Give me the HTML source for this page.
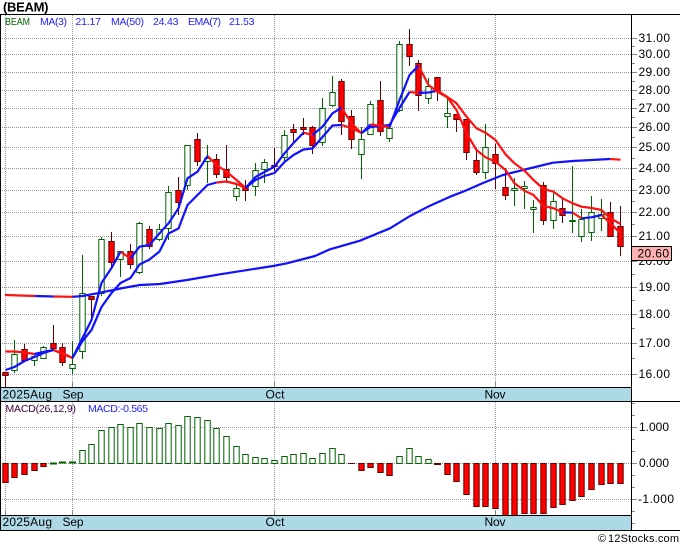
<!DOCTYPE html>
<html><head><meta charset="utf-8"><title>BEAM</title>
<style>html,body{margin:0;padding:0;background:#fff}svg{display:block}text{font-family:"Liberation Sans",sans-serif;fill:#000}.a{font-size:12px}.l{font-size:10.5px}.b rect{width:5.4px;transform:translateX(.3px)}</style>
</head><body>
<svg width="680" height="546" viewBox="0 0 680 546" xmlns="http://www.w3.org/2000/svg">
<rect width="680" height="546" fill="#fff"/>
<rect x="1" y="388" width="631" height="13" fill="#add8e6"/>
<rect x="1" y="516" width="631" height="14" fill="#add8e6"/>
<!-- grid -->
<path d="M0 38.5H632M0 54.5H632M0 72.5H632M0 90.5H632M0 108.5H632M0 127.5H632M0 147.5H632M0 168.5H632M0 190.5H632M0 212.5H632M0 236.5H632M0 261.5H632M0 287.5H632M0 314.5H632M0 343.5H632M0 374.5H632M0 427.5H632M0 463.5H632M0 499.5H632M5.5 15V382M72.5 15V382M274.5 15V382M495.5 15V382M5.5 402V510M72.5 402V510M274.5 402V510M495.5 402V510" stroke="#999" stroke-width="1" stroke-dasharray="1 1" fill="none"/>
<path d="M5.5 382V387M72.5 382V387M274.5 382V387M495.5 382V387M5.5 510V515M72.5 510V515M274.5 510V515M495.5 510V515M632 38.5H637M632 54.5H637M632 72.5H637M632 90.5H637M632 108.5H637M632 127.5H637M632 147.5H637M632 168.5H637M632 190.5H637M632 212.5H637M632 236.5H637M632 261.5H637M632 287.5H637M632 314.5H637M632 343.5H637M632 374.5H637M632 46.5H635M632 63.5H635M632 81.5H635M632 99.5H635M632 117.5H635M632 137.5H635M632 158.5H635M632 179.5H635M632 201.5H635M632 224.5H635M632 248.5H635M632 274.5H635M632 300.5H635M632 328.5H635M632 358.5H635M632 427.5H637M632 463.5H637M632 499.5H637M632 415.5H635M632 439.5H635M632 451.5H635M632 475.5H635M632 487.5H635M632 511.5H635M632 523.5H635M632 403.5H635" stroke="#888" stroke-width="1" fill="none"/>
<!-- macd bars -->
<g class="b" fill="#fff" stroke="#006400" stroke-width="1">
<path d="M50 463.5H57M59 462.5H66M69 462.5H76" fill="none" stroke-width="2"/>
<rect x="79.5" y="450.5" width="6" height="13"/><rect x="88.5" y="444.5" width="6" height="19"/><rect x="98.5" y="430.5" width="6" height="33"/><rect x="108.5" y="427.5" width="6" height="36"/><rect x="117.5" y="424.5" width="6" height="39"/><rect x="127.5" y="427.5" width="6" height="36"/><rect x="136.5" y="423.5" width="6" height="40"/><rect x="146.5" y="427.5" width="6" height="36"/><rect x="156.5" y="428.5" width="6" height="35"/><rect x="165.5" y="423.5" width="6" height="40"/><rect x="175.5" y="425.5" width="6" height="38"/><rect x="184.5" y="416.5" width="6" height="47"/><rect x="194.5" y="417.5" width="6" height="46"/><rect x="204.5" y="420.5" width="6" height="43"/><rect x="213.5" y="428.5" width="6" height="35"/><rect x="223.5" y="436.5" width="6" height="27"/><rect x="233.5" y="446.5" width="6" height="17"/><rect x="242.5" y="454.5" width="6" height="9"/><rect x="252.5" y="457.5" width="6" height="6"/><rect x="261.5" y="458.5" width="6" height="5"/><rect x="271.5" y="460.5" width="6" height="3"/><rect x="281.5" y="456.5" width="6" height="7"/><rect x="290.5" y="454.5" width="6" height="9"/><rect x="300.5" y="453.5" width="6" height="10"/><rect x="309.5" y="458.5" width="6" height="5"/><rect x="319.5" y="453.5" width="6" height="10"/><rect x="329.5" y="448.5" width="6" height="15"/><rect x="338.5" y="454.5" width="6" height="9"/><rect x="396.5" y="456.5" width="6" height="7"/><rect x="406.5" y="448.5" width="6" height="15"/><rect x="415.5" y="456.5" width="6" height="7"/><rect x="425.5" y="459.5" width="6" height="4"/>
</g>
<path d="M348 463.5H355" stroke="#600" fill="none"/>
<path d="M434 464H441" stroke="#600" stroke-width="2" fill="none"/>
<g class="b" fill="#f00" stroke="#600" stroke-width="1">
<rect x="2.5" y="463.5" width="6" height="19"/><rect x="11.5" y="463.5" width="6" height="14"/><rect x="21.5" y="463.5" width="6" height="11"/><rect x="31.5" y="463.5" width="6" height="7"/><rect x="40.5" y="463.5" width="6" height="3"/>
<rect x="358.5" y="463.5" width="6" height="7"/><rect x="367.5" y="463.5" width="6" height="4"/><rect x="377.5" y="463.5" width="6" height="9"/><rect x="386.5" y="463.5" width="6" height="12"/><rect x="444.5" y="463.5" width="6" height="11"/><rect x="453.5" y="463.5" width="6" height="18"/><rect x="463.5" y="463.5" width="6" height="31"/><rect x="473.5" y="463.5" width="6" height="43"/><rect x="482.5" y="463.5" width="6" height="43"/><rect x="492.5" y="463.5" width="6" height="45"/><rect x="502.5" y="463.5" width="6" height="52"/><rect x="511.5" y="463.5" width="6" height="52"/><rect x="521.5" y="463.5" width="6" height="50"/><rect x="530.5" y="463.5" width="6" height="50"/><rect x="540.5" y="463.5" width="6" height="50"/><rect x="550.5" y="463.5" width="6" height="44"/><rect x="559.5" y="463.5" width="6" height="41"/><rect x="569.5" y="463.5" width="6" height="37"/><rect x="578.5" y="463.5" width="6" height="33"/><rect x="588.5" y="463.5" width="6" height="26"/><rect x="598.5" y="463.5" width="6" height="21"/><rect x="607.5" y="463.5" width="6" height="20"/><rect x="617.5" y="463.5" width="6" height="20"/>
</g>
<!-- green wicks -->
<path d="M14.5 340V373M34.5 355V366M43.5 346V359M72.5 341V374M82.5 255V359M101.5 237V296M120.5 251V277M139.5 222V274M159.5 224V241M168.5 186V240M187.5 145V190M207.5 145V183M236.5 183V201M255.5 163V196M264.5 159V183M284.5 130V163M322.5 98V146M332.5 76V107M361.5 127V179M370.5 101V135M389.5 127V142M399.5 41V112M428.5 78V104M447.5 98V128M485.5 124V179M514.5 178V206M524.5 181V209M533.5 200V233M553.5 193V229M572.5 166V233M581.5 209V242M591.5 196V241M601.5 199V231" stroke="#006400" stroke-width="1" fill="none"/>
<!-- red wicks -->
<path d="M5.5 372V387M24.5 344V362M53.5 325V349M62.5 343V366M91.5 296V320M111.5 232V268M130.5 244V269M149.5 226V249M178.5 177V215M197.5 133V166M216.5 154V178M226.5 145V183M245.5 180V201M274.5 148V171M293.5 124V144M303.5 118V135M312.5 126V154M341.5 79V135M351.5 110V149M380.5 81V136M409.5 29V66M418.5 60V111M437.5 77V101M456.5 114V132M466.5 119V160M476.5 148V175M495.5 144V189M505.5 168V200M543.5 182V225M562.5 198V223M610.5 202V237M620.5 206V256" stroke="#600" stroke-width="1" fill="none"/>
<!-- green bodies -->
<g class="b" fill="#fff" stroke="#006400" stroke-width="1">
<rect x="11.5" y="354.5" width="6" height="16"/><rect x="31.5" y="356.5" width="6" height="4"/><rect x="40.5" y="347.5" width="6" height="11"/><rect x="69.5" y="364.5" width="6" height="4"/><rect x="79.5" y="293.5" width="6" height="58"/><rect x="98.5" y="239.5" width="6" height="54"/><rect x="117.5" y="251.5" width="6" height="8"/><rect x="136.5" y="223.5" width="6" height="49"/><rect x="156.5" y="229.5" width="6" height="10"/><rect x="165.5" y="192.5" width="6" height="36"/><rect x="184.5" y="145.5" width="6" height="40"/><rect x="204.5" y="158.5" width="6" height="3"/><rect x="233.5" y="188.5" width="6" height="8"/><rect x="252.5" y="170.5" width="6" height="16"/><rect x="261.5" y="162.5" width="6" height="7"/><rect x="281.5" y="135.5" width="6" height="22"/><rect x="319.5" y="108.5" width="6" height="34"/><rect x="329.5" y="92.5" width="6" height="13"/><rect x="358.5" y="139.5" width="6" height="15"/><rect x="367.5" y="104.5" width="6" height="30"/><rect x="386.5" y="128.5" width="6" height="10"/><rect x="396.5" y="44.5" width="6" height="66"/><rect x="425.5" y="86.5" width="6" height="12"/><rect x="444.5" y="113.5" width="6" height="3"/><rect x="482.5" y="147.5" width="6" height="25"/><rect x="511.5" y="188.5" width="6" height="2"/><rect x="521.5" y="186.5" width="6" height="2"/><rect x="530.5" y="207.5" width="6" height="2"/><rect x="550.5" y="201.5" width="6" height="19"/><rect x="569.5" y="220.5" width="6" height="1"/><rect x="578.5" y="219.5" width="6" height="17"/><rect x="588.5" y="212.5" width="6" height="20"/><rect x="598.5" y="214.5" width="6" height="4"/>
</g>
<!-- red bodies -->
<g class="b" fill="#f00" stroke="#600" stroke-width="1">
<rect x="2.5" y="372.5" width="6" height="3"/><rect x="21.5" y="349.5" width="6" height="11"/><rect x="50.5" y="343.5" width="6" height="5"/><rect x="59.5" y="347.5" width="6" height="15"/><rect x="88.5" y="296.5" width="6" height="3"/><rect x="108.5" y="241.5" width="6" height="21"/><rect x="127.5" y="251.5" width="6" height="13"/><rect x="146.5" y="229.5" width="6" height="17"/><rect x="175.5" y="190.5" width="6" height="12"/><rect x="194.5" y="139.5" width="6" height="22"/><rect x="213.5" y="159.5" width="6" height="15"/><rect x="223.5" y="169.5" width="6" height="8"/><rect x="242.5" y="186.5" width="6" height="4"/><rect x="271.5" y="165.5" width="6" height="1"/><rect x="290.5" y="129.5" width="6" height="3"/><rect x="300.5" y="127.5" width="6" height="2"/><rect x="309.5" y="127.5" width="6" height="18"/><rect x="338.5" y="81.5" width="6" height="40"/><rect x="348.5" y="116.5" width="6" height="23"/><rect x="377.5" y="100.5" width="6" height="31"/><rect x="406.5" y="44.5" width="6" height="12"/><rect x="415.5" y="63.5" width="6" height="32"/><rect x="434.5" y="77.5" width="6" height="14"/><rect x="453.5" y="114.5" width="6" height="5"/><rect x="463.5" y="119.5" width="6" height="33"/><rect x="473.5" y="160.5" width="6" height="12"/><rect x="492.5" y="154.5" width="6" height="9"/><rect x="502.5" y="187.5" width="6" height="8"/><rect x="540.5" y="185.5" width="6" height="35"/><rect x="559.5" y="208.5" width="6" height="7"/><rect x="607.5" y="212.5" width="6" height="24"/><rect x="617.5" y="226.5" width="6" height="20"/>
</g>
<!-- lines: MA50 -->
<g fill="none" stroke-width="2.2" stroke-linejoin="round" stroke-linecap="butt">
<path stroke="#f11" d="M5 295L35 296M53.5 296.5L72.5 296.8M610 159L620.5 159.7"/>
<path stroke="#11f" d="M35 296L53.5 296.5M72.5 296.8L82.5 296L97 293.3L123 288L140 285L160 284L187 280L220 274.3L273 266L287 263.3L315 256L330 249.3L360 240.7L390 228.3L410 216L430 205.7L450 196.7L463 191.7L483 183L503 175L527 169L553 162.7L573 161L610 159"/>
<!-- EMA7 -->
<path stroke="#f11" d="M5.5 351.5L14.5 351.5L24.5 352.5L34.5 354M53.5 350L62.5 354L72.5 358M216.5 182.5L226.5 181.5L236.5 184L245.5 188M341.5 125L351.5 128L361.5 133M409.5 92L418.5 93M437.5 90.7L447.5 97L456.5 103.3L466.5 116.7L476.5 128.3L485.5 132.7L495.5 140L505.5 154.3L514.5 163.3L524.5 170.7L533.5 180L543.5 189L553.5 191.7L562.5 198.3L572.5 203.3L581.5 206.7L591.5 208L601.5 210L610.5 218.3L620.5 224"/>
<path stroke="#11f" d="M34.5 354L43.5 352L53.5 350M72.5 358L82.5 341L91.5 330L101.5 307L111.5 293L120.5 283L130.5 278L139.5 264.5L149.5 259.5L159.5 251.5L168.5 233.5L178.5 228.5L187.5 205L197.5 195L207.5 185L216.5 182.5M245.5 188L255.5 180L264.5 176L274.5 173L284.5 162L293.5 155L303.5 149.5L312.5 148.5L322.5 137L332.5 125.5L341.5 125M361.5 133L370.5 127L380.5 126L389.5 125L399.5 108L409.5 92M418.5 93L428.5 92.5L437.5 90.7"/>
<!-- MA3 -->
<path stroke="#f11" d="M53.5 350L62.5 353L72.5 358M120.5 251.7L130.5 258.5M207.5 156L216.5 165L226.5 171.7L236.5 180L245.5 188M303.5 132.7L312.5 135M341.5 107.7L351.5 123.3L361.5 133.3M370.5 124.5L380.5 125.7L389.5 127.3M418.5 65.7L428.5 85L437.5 91.7L447.5 97.5L456.5 110L466.5 133.3L476.5 150L485.5 157.3L495.5 161.7L505.5 170L514.5 183.3L524.5 190.7L533.5 195L543.5 206L553.5 208.3L562.5 212.3M572.5 212.7L581.5 218.3M601.5 215L610.5 223.3L620.5 233.3"/>
<path stroke="#11f" d="M5.5 370L14.5 367L24.5 361L34.5 357L43.5 353L53.5 350M72.5 358L82.5 338L91.5 320L101.5 283L111.5 268L120.5 251.7M130.5 258.5L139.5 246.7L149.5 245L159.5 233.3L168.5 223.3L178.5 208.3L187.5 178.3L197.5 171.7L207.5 156M245.5 188L255.5 177L264.5 172L274.5 166.7L284.5 153.3L293.5 143L303.5 132.7M312.5 135L322.5 126.7L332.5 113.3L341.5 107.7M361.5 133.3L370.5 124.5M389.5 127.3L399.5 100L409.5 75L418.5 65.7M562.5 212.3L572.5 212.7M581.5 218.3L591.5 217.3L601.5 215"/>
</g>
<!-- frame -->
<path d="M0 14.5H680M0 387.5H632M0 401.5H680M0 515.5H632M0 530.5H680M0.5 14V531M631.5 14V531" stroke="#000" stroke-width="1" fill="none"/>
<!-- labels -->
<text x="3" y="11.5" font-size="13" font-weight="bold" textLength="45.5" lengthAdjust="spacing">(BEAM)</text>
<text class="l" x="5" y="25" style="fill:#006400" textLength="25" lengthAdjust="spacingAndGlyphs">BEAM</text>
<text class="l" x="40" y="25" style="fill:#2222ff" textLength="27">MA(3)</text>
<text class="l" x="75.5" y="25" style="fill:#2222ff" textLength="25.5">21.17</text>
<text class="l" x="111" y="25" style="fill:#2222ff" textLength="33">MA(50)</text>
<text class="l" x="153" y="25" style="fill:#2222ff" textLength="25.5">24.43</text>
<text class="l" x="188" y="25" style="fill:#2222ff" textLength="33">EMA(7)</text>
<text class="l" x="229" y="25" style="fill:#2222ff" textLength="25.5">21.53</text>
<text class="l" x="88" y="412" style="fill:#2222ff" textLength="60">MACD:-0.565</text>
<text class="l" x="5.5" y="412" style="fill:#400040" textLength="70.5">MACD(26,12,9)</text>
<text class="a" x="638.5" y="42" textLength="31.5">31.00</text>
<text class="a" x="638.5" y="58" textLength="31.5">30.00</text>
<text class="a" x="638.5" y="76" textLength="31.5">29.00</text>
<text class="a" x="638.5" y="94" textLength="31.5">28.00</text>
<text class="a" x="638.5" y="112" textLength="31.5">27.00</text>
<text class="a" x="638.5" y="131" textLength="31.5">26.00</text>
<text class="a" x="638.5" y="151" textLength="31.5">25.00</text>
<text class="a" x="638.5" y="172" textLength="31.5">24.00</text>
<text class="a" x="638.5" y="194" textLength="31.5">23.00</text>
<text class="a" x="638.5" y="216" textLength="31.5">22.00</text>
<text class="a" x="638.5" y="240" textLength="31.5">21.00</text>
<text class="a" x="638.5" y="265" textLength="31.5">20.00</text>
<text class="a" x="638.5" y="291" textLength="31.5">19.00</text>
<text class="a" x="638.5" y="318" textLength="31.5">18.00</text>
<text class="a" x="638.5" y="347" textLength="31.5">17.00</text>
<text class="a" x="638.5" y="378" textLength="31.5">16.00</text>
<text class="a" x="639" y="431" textLength="30">1.000</text>
<text class="a" x="639" y="467" textLength="30">0.000</text>
<text class="a" x="638" y="503" textLength="36">-1.000</text>
<text class="a" x="2.5" y="398.5" textLength="49.5">2025Aug</text>
<text class="a" x="62.5" y="398.5" textLength="21">Sep</text>
<text class="a" x="265.5" y="398.5" textLength="19">Oct</text>
<text class="a" x="484.5" y="398.5" textLength="21">Nov</text>
<text class="a" x="2.5" y="526" textLength="49.5">2025Aug</text>
<text class="a" x="62.5" y="526" textLength="21">Sep</text>
<text class="a" x="265.5" y="526" textLength="19">Oct</text>
<text class="a" x="484.5" y="526" textLength="21">Nov</text>
<rect x="631.5" y="246.5" width="40" height="14" fill="#ffb0b0" stroke="#000" stroke-width="1"/>
<text class="a" x="637.5" y="257.5" textLength="31.5">20.60</text>
<text x="598" y="542" font-size="11">©</text>
<text x="608" y="542" font-size="11" textLength="71">12Stocks.com</text>
</svg>
</body></html>
